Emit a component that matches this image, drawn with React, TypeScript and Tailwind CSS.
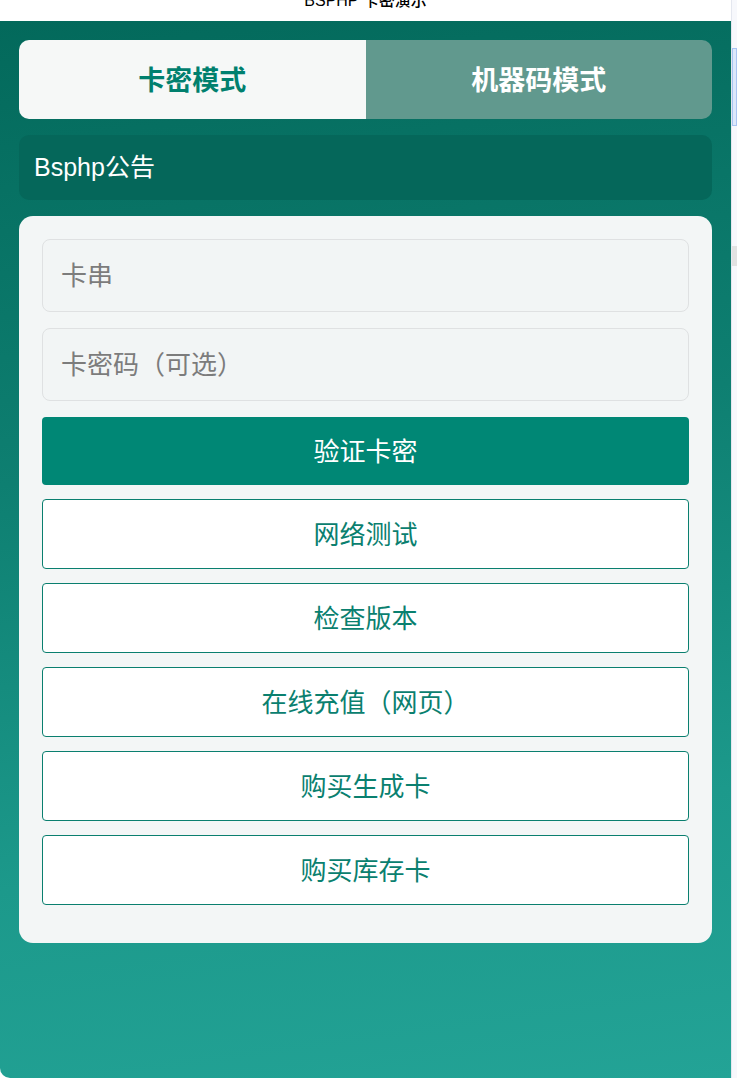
import React from "react";

const cjk = "font-['PingFang_SC','Liberation_Sans','Noto_Sans_CJK_SC',sans-serif]";

const actions = ["网络测试", "检查版本", "在线充值（网页）", "购买生成卡", "购买库存卡"];

const App = () => {
    return (
        <div className={`flex w-[737px] h-[1078px] bg-white overflow-hidden ${cjk}`}>
            <div className="flex flex-col w-[731px] h-full">
                <div className="h-[21px] bg-white overflow-hidden flex justify-center">
                    <span className="-mt-[10px] text-[16px] font-medium text-black leading-[22px]">BSPHP 卡密演示</span>
                </div>

                <div className="flex-1 flex flex-col gap-4 px-[19px] pt-[19px] rounded-bl-[10px] bg-[linear-gradient(172deg,#03695b_0%,#0e7f71_40%,#1c998b_75%,#23a396_100%)]">
                    <div className="flex h-[79px] rounded-[10px] overflow-hidden">
                        <button className="flex-1 pt-[3px] bg-[#f6f8f7] text-[#00806e] text-[27px] font-bold">卡密模式</button>
                        <button className="flex-1 pt-[3px] bg-[#61998e] text-white text-[27px] font-bold">机器码模式</button>
                    </div>

                    <div className="h-[65px] flex items-center px-[15px] rounded-[10px] bg-[#05675a] text-white text-[25px]">
                        Bsphp公告
                    </div>

                    <div className="flex flex-col px-[23px] pt-[23px] pb-[38px] rounded-[14px] bg-[#f3f6f6]">
                        <div className="flex flex-col gap-4">
                            <input
                                className="h-[73px] px-[18px] pt-[2px] rounded-[8px] border border-[#dfe1e2] bg-[#f2f5f5] text-[26px] placeholder:text-[#7c7c7c] outline-none"
                                placeholder="卡串"
                            />
                            <input
                                className="h-[73px] px-[18px] pt-[2px] rounded-[8px] border border-[#dfe1e2] bg-[#f2f5f5] text-[26px] placeholder:text-[#7c7c7c] outline-none"
                                placeholder="卡密码（可选）"
                            />
                            <button className="h-[68px] pt-[2px] rounded-[4px] bg-[#008775] text-white text-[26px]">验证卡密</button>
                        </div>
                        <div className="flex flex-col gap-[14px] mt-[14px]">
                            {actions.map((label) => (
                                <button
                                    key={label}
                                    className="h-[70px] pt-[2px] rounded-[4px] border border-[#0a7f6f] bg-white text-[#0a806f] text-[26px]"
                                >
                                    {label}
                                </button>
                            ))}
                        </div>
                    </div>
                </div>
            </div>

            <div className="w-[6px] h-full flex flex-col bg-[#f7f8fc] border-l border-[#e4e7ef]">
                <div className="h-[48px]" />
                <div className="h-[78px] bg-[#dde8fb] border border-[#a9c4f2]" />
                <div className="h-[120px]" />
                <div className="h-[20px] bg-[#e2e2e2]" />
                <div className="flex-1" />
            </div>
        </div>
    );
};

export default App;
